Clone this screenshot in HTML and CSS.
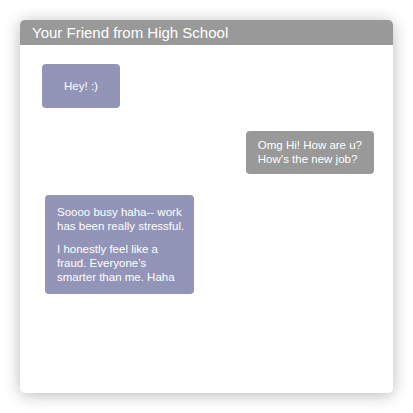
FILE: index.html
```html
<!DOCTYPE html>
<html lang="en">
  <head>
    <meta charset="UTF-8" />
    <title>Chat</title>
    <link rel="stylesheet" href="styles.css">
  </head>
  <body>
    <div class="chat">
      <div class="chat-header">Your Friend from High School</div>
      <div class="chat-body">
        <div class="bubble them hey">Hey! :)</div>
        <div class="bubble me">
          <p>Omg Hi! How are u?<br>How’s the new job?</p>
        </div>
        <div class="bubble them long">
          <p>Soooo busy haha-- work<br>has been really stressful.</p>
          <p>I honestly feel like a<br>fraud. Everyone’s<br>smarter than me. Haha</p>
        </div>
      </div>
    </div>
  </body>
</html>
```

FILE: styles.css
```css
body {
  margin: 0;
  padding: 20px;
  background-color: #fff;
  font-family: 'Liberation Sans', Arial, sans-serif;
}
.chat {
  width: 373px;
  height: 373px;
  background-color: #fff;
  border-radius: 5px;
  box-shadow: 0 2px 16px rgba(0, 0, 0, 0.28);
  overflow: hidden;
  display: flex;
  flex-direction: column;
}
.chat-header {
  height: 25px;
  line-height: 26px;
  padding: 0 12px;
  background-color: #999;
  color: #fff;
  font-size: 15px;
}
.chat-body {
  display: flex;
  flex-direction: column;
  align-items: flex-start;
  padding: 19px 19px 0 22px;
}
.bubble {
  color: #fff;
  font-size: 11.5px;
  line-height: 14px;
  border-radius: 4px;
  white-space: nowrap;
}
.bubble p {
  margin: 0;
}
.them {
  background-color: #9294b8;
}
.me {
  background-color: #999;
  align-self: flex-end;
  margin-top: 23px;
  padding: 7px 12px 8px 12px;
}
.hey {
  width: 78px;
  height: 44px;
  display: flex;
  align-items: center;
  justify-content: center;
}
.long {
  box-sizing: border-box;
  margin-top: 21px;
  margin-left: 3px;
  width: 149px;
  padding: 10px 6px 10px 12px;
}
.long p + p {
  margin-top: 9px;
}
```
